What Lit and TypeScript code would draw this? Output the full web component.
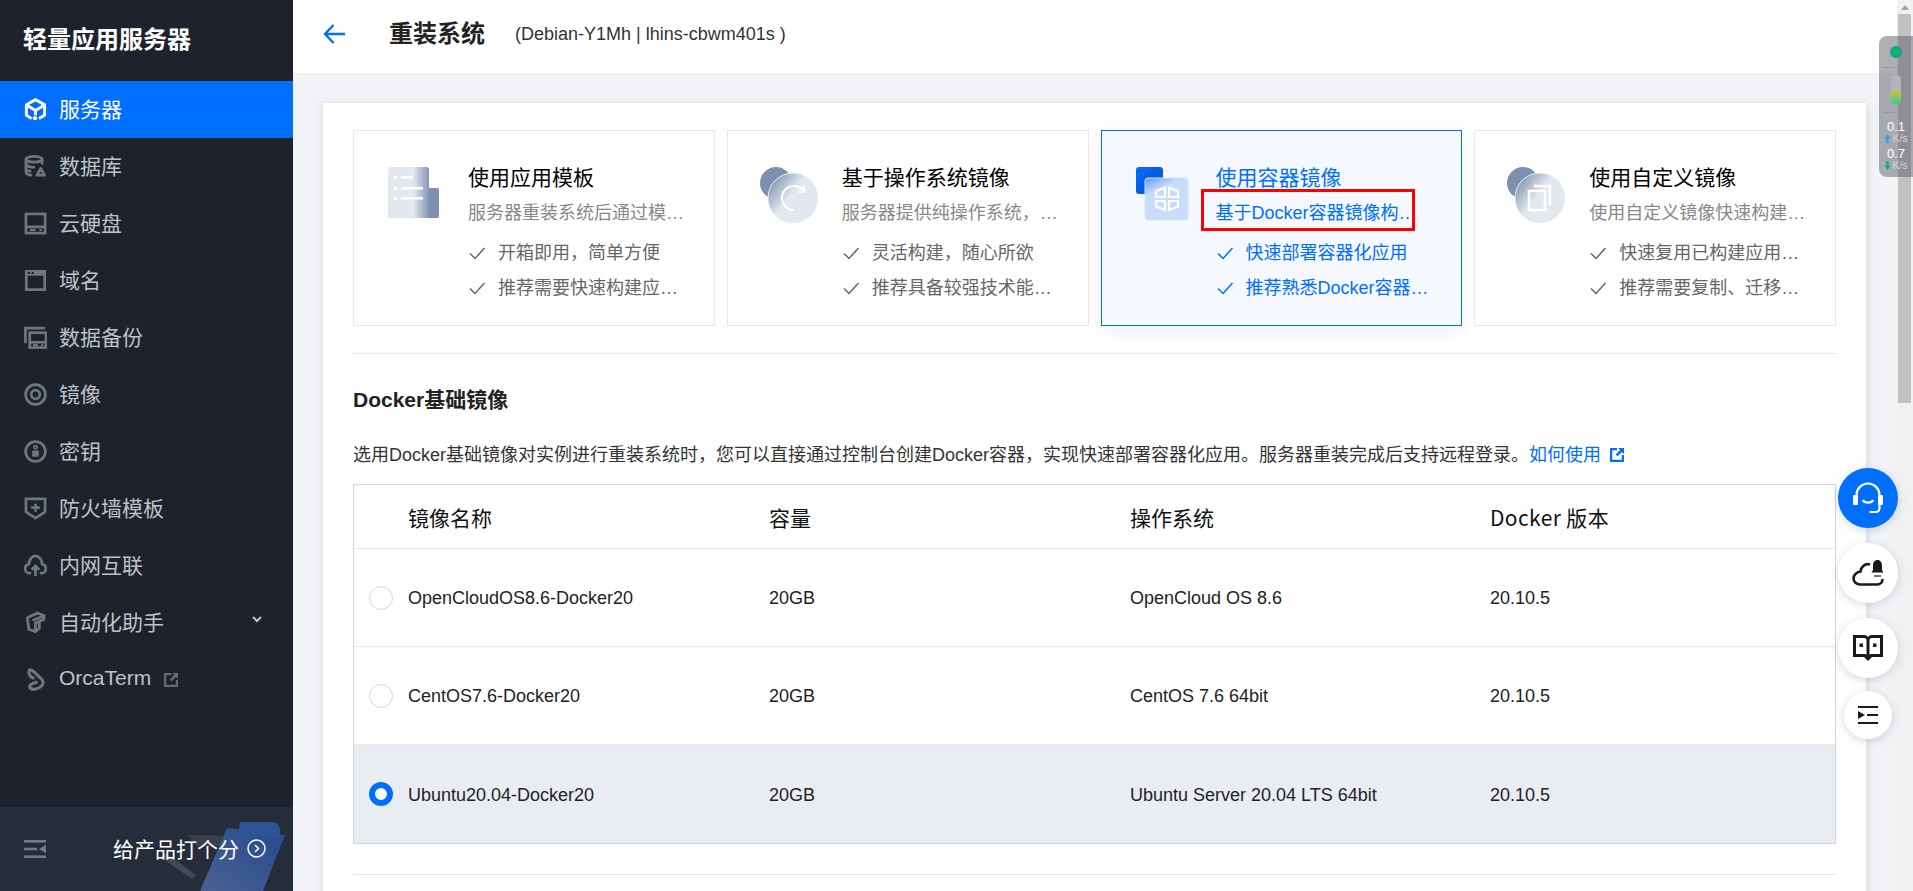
import { LitElement, css, html, svg } from 'lit';
import { customElement } from 'lit/decorators.js';
import { classMap } from 'lit/directives/class-map.js';

const navIcons = {
  server: html`<svg viewBox="0 0 24 24" fill="none" stroke="currentColor" stroke-width="3" stroke-linejoin="round"><path d="M8 21.500 2.500 18V7L12 1.700 21.500 7v11l-6 3.500"/><path d="M3 7.500l9 5.500 9-5.500M12 13v5"/><circle cx="11.500" cy="21" r="2.200" fill="currentColor" stroke="none"/></svg>`,
  db: html`<svg viewBox="0 0 24 24" fill="none" stroke="currentColor" stroke-width="2.800"><ellipse cx="10.500" cy="4.500" rx="8.500" ry="3"/><path d="M2 4.500v13c0 2.500 3 3.500 6.500 3.500M19 4.500V10M2 10.500c2 2 6 2.500 9.500 2.200M2 15.500c1.500 1 3.500 1.500 5.500 1.500"/><path d="M17.500 14l4 7h-8z" stroke-linejoin="round"/></svg>`,
  disk: html`<svg viewBox="0 0 24 24" fill="none" stroke="currentColor" stroke-width="2.800"><rect x="2" y="2" width="20" height="20"/><path d="M2 15.500h20"/><path d="M6 18.700h6M16 18.700h2.500" stroke-width="2.200"/></svg>`,
  domain: html`<svg viewBox="0 0 24 24" fill="currentColor"><path fill-rule="evenodd" d="M1 1h22v22H1zM3.800 7v13.200h16.400V7z"/><rect x="4" y="3" width="2.200" height="2.200" fill="#1e222d"/><rect x="8" y="3" width="2.200" height="2.200" fill="#1e222d"/></svg>`,
  backup: html`<svg viewBox="0 0 24 24" fill="none" stroke="currentColor" stroke-width="2.800"><path d="M1.500 18V2.200H22"/><rect x="6" y="7" width="17" height="15.500"/><path d="M6 17h17"/><path d="M9.500 19.800h5M18 19.800h2" stroke-width="2"/></svg>`,
  mirror: html`<svg viewBox="0 0 24 24" fill="none" stroke="currentColor"><circle cx="12" cy="12" r="10.300" stroke-width="2.800"/><circle cx="12" cy="12" r="4.500" stroke-width="2.800"/></svg>`,
  key: html`<svg viewBox="0 0 24 24" fill="none" stroke="currentColor" stroke-width="2.800"><circle cx="12" cy="12" r="10.300"/><circle cx="12" cy="7.500" r="1.700" stroke-width="1.800"/><rect x="8.500" y="11" width="7" height="6.500" rx="1" fill="currentColor" stroke="none"/></svg>`,
  shield: html`<svg viewBox="0 0 24 24" fill="none" stroke="currentColor" stroke-width="2.800"><path d="M2 2h20v13.500L12 22 2 15.500z"/><path d="M12 7v8.500M7.500 11h9" stroke-width="2.800"/></svg>`,
  net: html`<svg viewBox="0 0 24 24" fill="none" stroke="currentColor" stroke-width="2.900"><path d="M7.500 20H6a4.800 4.800 0 0 1-1-9.500C5.500 5.500 8.500 2 12 2s6.500 3.500 7 8.500A4.800 4.800 0 0 1 18 20h-1.500"/><path d="M12 23v-9M8 16.500l4-4 4 4"/></svg>`,
  auto: html`<svg viewBox="0 0 24 24" fill="none" stroke="currentColor" stroke-width="2.900" stroke-linejoin="round"><path d="M3.500 7 14 2l7 3v3.500L12 12.500v9L5 19z"/><path d="M9 10l11-4.500M16 10v8l-4 3.500"/></svg>`,
  orca: html`<svg viewBox="0 0 24 24" fill="none" stroke="currentColor" stroke-width="3.200" stroke-linecap="round"><path d="M6 2c3.500 0 5 2.500 8 5.500 3 2.700 6 5 6 7.500s-3 5-6.500 6.500c-3 1-7 1-7.500-1.500-.4-2.500 3.500-4.500 7-5"/><path d="M6 2C4 5 5.500 8.500 9.500 10.500"/></svg>`,
};

const externalIcon = html`<svg viewBox="0 0 16 16" fill="currentColor"><path d="M1 1h7v2.200H3.200v9.600h9.600V8H15v7H1z"/><path d="M9 1h6v6l-2.100-2.100L8.500 9.300 6.700 7.500l4.400-4.400z"/></svg>`;

const docIcon = html`<svg viewBox="0 0 64 64">
  <defs>
    <linearGradient id="docfade" x1="0" x2="1" y1="0" y2="0">
      <stop offset="0.62" stop-color="#e3e7ee"/><stop offset="1" stop-color="#8296b4"/>
    </linearGradient>
  </defs>
  <rect x="40" y="25" width="19" height="30" rx="2" fill="#7d90ae"/>
  <rect x="8" y="4" width="41" height="51" rx="2.500" fill="url(#docfade)"/>
  <g fill="#fff">
    <rect x="14" y="13" width="3" height="3"/><rect x="21" y="13" width="12" height="2.500"/>
    <rect x="14" y="24" width="3" height="3"/><rect x="21" y="24" width="22" height="2.500"/>
    <rect x="14" y="34" width="3" height="3"/><rect x="21" y="34" width="22" height="2.500"/>
  </g>
</svg>`;

const discIcon = (glyph: unknown, id: string) => html`<svg viewBox="0 0 64 64">
  <defs>
    <linearGradient id=${id} x1="0.15" x2="0.75" y1="0.1" y2="0.55">
      <stop offset="0.05" stop-color="#90a2bb"/><stop offset="0.6" stop-color="#e3e7ee"/>
    </linearGradient>
  </defs>
  <circle cx="22" cy="20" r="16" fill="#7d90ae"/>
  <circle cx="39" cy="35" r="25" fill="url(#${id})" stroke="#eef0f5" stroke-width="1"/>
  ${glyph}
</svg>`;

const rebuildGlyph = svg`<path d="M40 47a12 12 0 1 1 10-18.600" fill="none" stroke="#fff" stroke-width="2"/><path d="M50 22v7h-6" fill="none" stroke="#fff" stroke-width="1.500"/>`;
const copyGlyph = svg`<path d="M28 28h16v19H28z" fill="none" stroke="#fff" stroke-width="2.500"/><path d="M33 23h16v19" fill="none" stroke="#fff" stroke-width="2.500"/>`;

const containerIcon = html`<svg viewBox="0 0 64 64">
  <defs>
    <linearGradient id="boxback" x1="0" x2="1" y1="0" y2="1">
      <stop offset="0" stop-color="#0a6cf5"/><stop offset="1" stop-color="#0050d8"/>
    </linearGradient>
    <linearGradient id="boxfront" x1="0" x2="0.3" y1="0" y2="0.6">
      <stop offset="0.05" stop-color="#6aa0f2"/><stop offset="0.6" stop-color="#c9dcfb"/>
    </linearGradient>
  </defs>
  <rect x="8" y="4" width="27" height="27" rx="3" fill="url(#boxback)"/>
  <rect x="17" y="15" width="43" height="42" rx="3" fill="url(#boxfront)" stroke="#d4e3fc"/>
  <g fill="none" stroke="#fff" stroke-width="2.200">
    <path d="M37 24.500v9.500h-9v-6z"/><path d="M41 24.500v9.500h9v-6z"/>
    <path d="M37 47v-9h-9v5.500z"/><path d="M41 47v-9h9v5.500z"/>
  </g>
</svg>`;

const checkIcon = html`<svg class="check" viewBox="0 0 18 18" fill="none" stroke="currentColor" stroke-width="1.500"><path d="M2 9.500l5 5L16.500 4"/></svg>`;

@customElement('app-root')
export class AppRoot extends LitElement {
  static styles = css`
    :host {
      display: flex;
      height: 100vh;
      overflow: hidden;
      position: relative;
      font-family: "Liberation Sans", "Noto Sans CJK SC", sans-serif;
      color: #222;
      background: #f2f3f7;
    }
    svg { display: block; flex: none; }

    .side {
      width: 293px;
      flex: none;
      background: #1e222d;
      display: flex;
      flex-direction: column;
      color: #bcc2c8;
    }
    .brand {
      height: 81px;
      padding: 0 0 7px 23px;
      box-sizing: border-box;
      display: flex;
      align-items: center;
      font-size: 24px;
      font-weight: 700;
      color: #fff;
    }
    .nav { flex: 1; }
    .item {
      height: 57px;
      display: flex;
      align-items: center;
      padding-left: 24px;
      font-size: 21px;
    }
    .item .ico { width: 23px; height: 23px; margin-right: 12px; color: #6e7781; }
    .item .lbl { padding-bottom: 3px; }
    .item.active { background: #006eff; color: #fff; }
    .item.active .ico { color: #fff; }
    .ext { width: 16px; height: 16px; margin-left: 12px; color: #666b73; }
    .chev { width: 10px; height: 7px; margin-left: auto; margin-right: 31px; margin-bottom: 6px; color: #bcc2c8; }
    .foot {
      height: 84px;
      flex: none;
      background: #252c3a;
      display: flex;
      align-items: center;
      padding: 0 27px 0 24px;
      position: relative;
      overflow: hidden;
      color: #fff;
      font-size: 21px;
    }
    .foot .art { position: absolute; left: 150px; top: 0; width: 143px; height: 84px; }
    .foot .collapse { width: 22px; height: 18px; color: #747b84; position: relative; }
    .foot .rate { margin-left: auto; display: flex; align-items: center; gap: 8px; position: relative; padding-bottom: 2px; }
    .foot .rate svg { width: 19px; height: 19px; }

    .main { flex: 1; min-width: 0; display: flex; flex-direction: column; }
    .top {
      height: 73px;
      flex: none;
      background: #fff;
      display: flex;
      align-items: center;
      padding: 0 0 5px 30px;
      box-sizing: border-box;
    }
    .back { width: 22px; height: 22px; color: #006eff; margin-right: 44px; }
    .top h1 { margin: 0 30px 0 0; font-size: 24px; line-height: 32px; font-weight: 700; color: #222; }
    .top .sub { font-size: 18px; color: #333; }
    .body { flex: 1; padding: 30px 31px 0 30px; min-height: 0; }
    .panel {
      background: #fff;
      box-shadow: 0 2px 8px rgba(54, 58, 80, .16);
      padding: 27px 30px 40px;
    }
    .opts { display: flex; gap: 12px; }
    .opt {
      flex: 1;
      height: 196px;
      box-sizing: border-box;
      border: 1px solid #e5e8ee;
      display: flex;
      padding: 33px 0 0 26px;
      position: relative;
      min-width: 0;
    }
    .opt > svg { width: 64px; height: 64px; margin-right: 24px; margin-top: -1px; }
    .opt .txt { width: 217px; min-width: 0; }
    .opt h3 { margin: 0; font-size: 21px; line-height: 28px; font-weight: 400; color: #000; }
    .clip { white-space: nowrap; overflow: hidden; text-overflow: ellipsis; }
    .opt .desc { margin-top: 9px; font-size: 18px; line-height: 24px; color: #888; }
    .opt ul { list-style: none; margin: 16px 0 0; padding: 0; display: flex; flex-direction: column; gap: 11px; }
    .opt li { display: flex; align-items: center; font-size: 18px; line-height: 24px; color: #666; }
    .opt li span { min-width: 0; flex: 1; }
    .check { width: 18px; height: 18px; margin-right: 12px; color: #666; }
    .opt.on { background: #f5f8ff; border-color: #006eff; box-shadow: 0 6px 16px rgba(0, 60, 160, .08); }
    .opt.on h3, .opt.on .desc, .opt.on li, .opt.on .check { color: #006eff; }
    .mark {
      position: absolute;
      left: 99px;
      top: 58px;
      width: 214px;
      height: 42px;
      box-sizing: border-box;
      border: 3px solid #f00;
    }

    hr { border: 0; border-top: 1px solid #e5e8ee; margin: 0; }
    hr.first { margin-top: 27px; }
    h2 { margin: 32px 0 0; font-size: 21px; line-height: 28px; font-weight: 700; color: #222; }
    .note { margin: 29px 0 0; font-size: 18px; line-height: 24px; color: #333; display: flex; align-items: center; white-space: nowrap; }
    .note a { color: #006eff; display: flex; align-items: center; gap: 8px; }
    .note a svg { width: 16px; height: 16px; }
    .tbl { margin-top: 17px; border: 1px solid #d0d6e0; }
    .row {
      display: grid;
      grid-template-columns: 54px 361px 361px 360px 1fr;
      align-items: center;
      height: 98px;
      border-top: 1px solid #e5e8ee;
      box-sizing: border-box;
      font-size: 18px;
      color: #222;
    }
    .row .cell { padding-top: 2px; }
    .row.head { height: 64px; border-top: 0; border-bottom: 1px solid #d0d6e0; font-size: 21px; color: #111; margin-bottom: -1px; }
    .row.head .ver { font-family: "Noto Sans CJK SC", sans-serif; letter-spacing: .4px; }
    .row.sel { background: #e9edf2; height: 99px; }
    .radio {
      width: 24px;
      height: 24px;
      box-sizing: border-box;
      border: 1px solid #d0d6e0;
      border-radius: 50%;
      background: #fff;
      justify-self: center;
    }
    .row.sel .radio { border: 6px solid #006eff; }
    .gap { margin-top: 30px; }

    .bar { width: 16px; flex: none; background: #f1f1f1; position: relative; }
    .bar .up { width: 0; height: 0; margin: 5px auto 0; border: 4px solid transparent; border-top: 0; border-bottom: 5px solid #a3a3a3; }
    .bar .thumb { position: absolute; left: 1px; right: 2px; top: 14px; height: 389px; background: #c1c1c1; }

    .meter {
      position: absolute;
      right: 0;
      top: 36px;
      width: 34px;
      height: 141px;
      border-radius: 8px 0 0 8px;
      background: rgba(88, 88, 96, .48);
      display: flex;
      flex-direction: column;
      align-items: center;
      box-sizing: border-box;
      padding-top: 11px;
      color: #fff;
    }
    .meter .dot { width: 10px; height: 10px; border-radius: 50%; background: #00b96b; box-shadow: 0 0 0 1px #4a78b8; margin-bottom: 10px; }
    .meter .pill { width: 10px; height: 30px; border-radius: 5px; margin: 7px 0; background: linear-gradient(#b4b4b9 0 52%, #c4cc2a 52%, #3cc4a6); }
    .meter .line { width: 26px; border-top: 1px solid rgba(120, 160, 150, .6); }
    .meter .line.last { margin-bottom: 7px; }
    .meter .num { font-size: 13px; line-height: 13px; }
    .meter .unit { display: flex; align-items: center; gap: 2px; font-size: 10.5px; line-height: 11px; color: #d4d4d8; margin-bottom: 3px; }
    .meter .unit i { width: 6px; height: 9px; display: block; }
    .meter .unit .u { background: #22a8f5; clip-path: polygon(50% 0, 100% 50%, 70% 50%, 70% 100%, 30% 100%, 30% 50%, 0 50%); }
    .meter .unit .d { background: #00b96b; clip-path: polygon(30% 0, 70% 0, 70% 50%, 100% 50%, 50% 100%, 0 50%, 30% 50%); }

    .dock {
      position: absolute;
      right: 15px;
      top: 468px;
      width: 60px;
      display: flex;
      flex-direction: column;
      align-items: center;
      gap: 15px;
    }
    .fab {
      width: 60px;
      height: 60px;
      border-radius: 50%;
      background: #fff;
      box-shadow: 0 2px 10px rgba(54, 58, 80, .2);
      display: flex;
      align-items: center;
      justify-content: center;
      color: #1a1a1a;
    }
    .fab svg { width: 32px; height: 32px; }
    .fab.blue { background: #006eff; color: #fff; }
    .fab.small { width: 48px; height: 48px; margin-top: -2px; }
    .fab.small svg { width: 22px; height: 22px; }
  `;

  private nav = [
    { label: '服务器', icon: navIcons.server, active: true },
    { label: '数据库', icon: navIcons.db },
    { label: '云硬盘', icon: navIcons.disk },
    { label: '域名', icon: navIcons.domain },
    { label: '数据备份', icon: navIcons.backup },
    { label: '镜像', icon: navIcons.mirror },
    { label: '密钥', icon: navIcons.key },
    { label: '防火墙模板', icon: navIcons.shield },
    { label: '内网互联', icon: navIcons.net },
    { label: '自动化助手', icon: navIcons.auto, more: true },
    { label: 'OrcaTerm', icon: navIcons.orca, external: true },
  ];

  private options = [
    {
      title: '使用应用模板',
      desc: '服务器重装系统后通过模板部署应用',
      points: ['开箱即用，简单方便', '推荐需要快速构建应用的用户'],
      icon: docIcon,
    },
    {
      title: '基于操作系统镜像',
      desc: '服务器提供纯操作系统，不含应用',
      points: ['灵活构建，随心所欲', '推荐具备较强技术能力的用户'],
      icon: discIcon(rebuildGlyph, 'disc-a'),
    },
    {
      title: '使用容器镜像',
      desc: '基于Docker容器镜像构建应用环境',
      points: ['快速部署容器化应用', '推荐熟悉Docker容器的用户'],
      icon: containerIcon,
      on: true,
    },
    {
      title: '使用自定义镜像',
      desc: '使用自定义镜像快速构建应用环境',
      points: ['快速复用已构建应用的镜像', '推荐需要复制、迁移实例的用户'],
      icon: discIcon(copyGlyph, 'disc-b'),
    },
  ];

  private images = [
    { name: 'OpenCloudOS8.6-Docker20', size: '20GB', os: 'OpenCloud OS 8.6', ver: '20.10.5' },
    { name: 'CentOS7.6-Docker20', size: '20GB', os: 'CentOS 7.6 64bit', ver: '20.10.5' },
    { name: 'Ubuntu20.04-Docker20', size: '20GB', os: 'Ubuntu Server 20.04 LTS 64bit', ver: '20.10.5', sel: true },
  ];

  private renderSide() {
    return html`
      <aside class="side">
        <div class="brand">轻量应用服务器</div>
        <nav class="nav">
          ${this.nav.map(
            (n) => html`
              <div class=${classMap({ item: true, active: !!n.active })}>
                <span class="ico">${n.icon}</span>
                <span class="lbl">${n.label}</span>
                ${n.external ? html`<span class="ext">${externalIcon}</span>` : ''}
                ${n.more
                  ? html`<svg class="chev" viewBox="0 0 10 7" fill="none" stroke="currentColor" stroke-width="2"><path d="M1 1l4 4 4-4"/></svg>`
                  : ''}
              </div>
            `
          )}
        </nav>
        <div class="foot">
          <svg class="art" viewBox="0 0 143 84">
            <defs>
              <linearGradient id="clipb" x1="0" x2="1" y1="1" y2="0">
                <stop offset="0" stop-color="#4a6291"/><stop offset="1" stop-color="#234a8e"/>
              </linearGradient>
            </defs>
            <path d="M37 28l50 1v10l-40 0z" fill="#4a505c" opacity=".55"/>
            <path d="M10 50l6-4 30 22-4 4z" fill="#4a505c" opacity=".8"/>
            <path d="M77 21l58 7-22 56H50z" fill="url(#clipb)"/>
            <path d="M90 15h32q6 0 8 7v8H88z" fill="#2f5394"/>
          </svg>
          <svg class="collapse" viewBox="0 0 22 18" fill="currentColor"><rect width="22" height="2.600"/><rect y="15.400" width="22" height="2.600"/><rect y="7.700" width="13" height="2.600"/><path d="M22 4.500v9L15 9z"/></svg>
          <div class="rate">
            给产品打个分
            <svg viewBox="0 0 19 19" fill="none" stroke="currentColor" stroke-width="1.500"><circle cx="9.500" cy="9.500" r="8.500"/><path d="M8 6l3.500 3.500L8 13"/></svg>
          </div>
        </div>
      </aside>
    `;
  }

  private renderOption(o: (typeof this.options)[number]) {
    return html`
      <div class=${classMap({ opt: true, on: !!o.on })}>
        ${o.icon}
        <div class="txt">
          <h3>${o.title}</h3>
          <div class="desc clip">${o.desc}</div>
          <ul>
            ${o.points.map((p) => html`<li>${checkIcon}<span class="clip">${p}</span></li>`)}
          </ul>
        </div>
        ${o.on ? html`<div class="mark"></div>` : ''}
      </div>
    `;
  }

  render() {
    return html`
      ${this.renderSide()}
      <main class="main">
        <header class="top">
          <svg class="back" viewBox="0 0 22 22" fill="none" stroke="currentColor" stroke-width="2.400"><path d="M22 11H2M10.500 2 2 11l8.500 9"/></svg>
          <h1>重装系统</h1>
          <span class="sub">(Debian-Y1Mh | lhins-cbwm401s )</span>
        </header>
        <div class="body">
          <section class="panel">
            <div class="opts">${this.options.map((o) => this.renderOption(o))}</div>
            <hr class="first" />
            <h2>Docker基础镜像</h2>
            <p class="note">
              选用Docker基础镜像对实例进行重装系统时，您可以直接通过控制台创建Docker容器，实现快速部署容器化应用。服务器重装完成后支持远程登录。
              <a>如何使用 ${externalIcon}</a>
            </p>
            <div class="tbl">
              <div class="row head">
                <span></span><span>镜像名称</span><span>容量</span><span>操作系统</span><span class="ver">Docker 版本</span>
              </div>
              ${this.images.map(
                (r) => html`
                  <div class=${classMap({ row: true, sel: !!r.sel })}>
                    <span class="radio"></span>
                    <span class="cell">${r.name}</span>
                    <span class="cell">${r.size}</span>
                    <span class="cell">${r.os}</span>
                    <span class="cell">${r.ver}</span>
                  </div>
                `
              )}
            </div>
            <hr class="gap" />
          </section>
        </div>
      </main>
      <div class="bar"><div class="up"></div><div class="thumb"></div></div>

      <div class="meter">
        <div class="dot"></div>
        <div class="line"></div>
        <div class="pill"></div>
        <div class="line last"></div>
        <div class="num">0.1</div>
        <div class="unit"><i class="u"></i>K/s</div>
        <div class="num">0.7</div>
        <div class="unit"><i class="d"></i>K/s</div>
      </div>

      <div class="dock">
        <div class="fab blue">
          <svg viewBox="0 0 32 32" fill="none" stroke="currentColor" stroke-width="2.200">
            <path d="M4.500 15v-2a11.500 11.500 0 0 1 23 0v2"/>
            <rect x="1" y="13" width="5" height="10" rx="1" fill="currentColor" stroke="none"/>
            <rect x="26" y="13" width="5" height="10" rx="1" fill="currentColor" stroke="none"/>
            <path d="M11 18c1.500 3.500 8.500 3.500 10 0"/>
            <path d="M27.500 23v3c0 2.500-1.500 4-4 4h-6"/>
          </svg>
        </div>
        <div class="fab">
          <svg viewBox="0 0 32 32" fill="none" stroke="currentColor" stroke-width="2.600">
            <path d="M18 7.500C13 6 9 10 8.500 14.500 4 15 1.500 18.500 1.500 21.500 1.500 25 4.500 27.500 8 27.500h17c3.500 0 5.500-2.500 5.500-5.500"/>
            <path d="M25.500 3c3 0 4.500 2.500 4.500 6v4l1.500 2.500h-12l1.500-2.500V9c0-3.500 1.500-6 4.500-6z" fill="currentColor" stroke="none"/>
            <path d="M22 19h7" stroke-width="1.200"/>
          </svg>
        </div>
        <div class="fab">
          <svg viewBox="0 0 32 32" fill="currentColor">
            <path fill-rule="evenodd" d="M1 3h11c2 0 3.300.8 4 2 .7-1.200 2-2 4-2h11v22H20l-4 4-4-4H1zM4 6v16h9.500l1 1V8c0-1.200-1-2-2.500-2zm24 0h-8c-1.500 0-2.500.8-2.500 2v15l1-1H28z"/>
            <rect x="7.500" y="11.500" width="3.500" height="3.500"/><rect x="21" y="11.500" width="3.500" height="3.500"/>
          </svg>
        </div>
        <div class="fab small">
          <svg viewBox="0 0 22 22" fill="currentColor">
            <rect x="1" y="2" width="20" height="2"/><rect x="1" y="18" width="20" height="2"/>
            <rect x="10" y="10" width="11" height="2"/>
            <path d="M1 7l7 4-7 4z"/>
          </svg>
        </div>
      </div>
    `;
  }
}
